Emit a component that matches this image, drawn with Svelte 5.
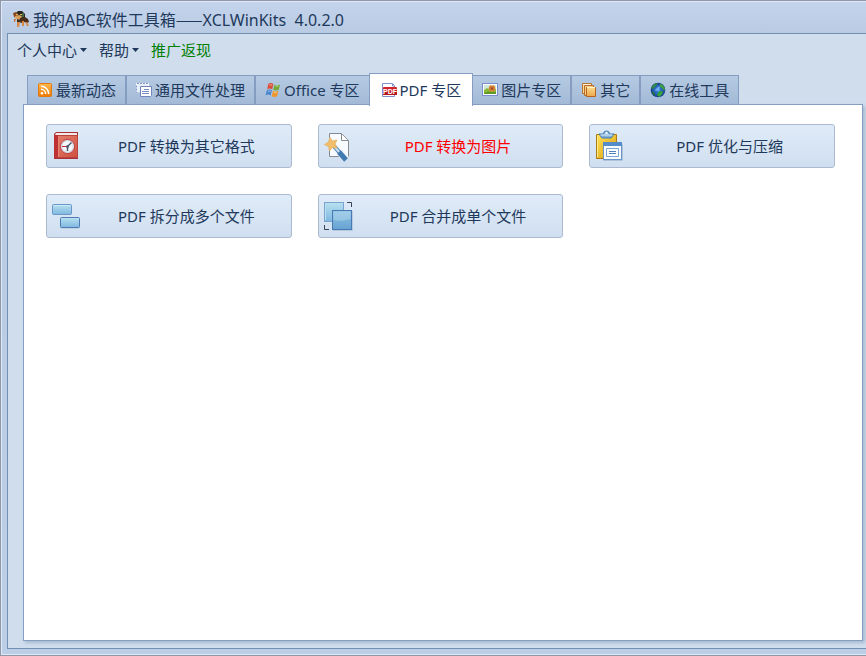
<script>
    let activeTab = $state('pdf');

    const menus = [
        { label: '个人中心', dropdown: true },
        { label: '帮助', dropdown: true },
        { label: '推广返现', highlight: true }
    ];

    const tabs = [
        { id: 'news', label: '最新动态' },
        { id: 'files', label: '通用文件处理' },
        { id: 'office', label: 'Office 专区' },
        { id: 'pdf', label: 'PDF 专区' },
        { id: 'image', label: '图片专区' },
        { id: 'other', label: '其它' },
        { id: 'online', label: '在线工具' }
    ];

    const tools = [
        { icon: 'book', label: 'PDF 转换为其它格式', tab: 'pdf' },
        { icon: 'wand', label: 'PDF 转换为图片', tab: 'pdf', hot: true },
        { icon: 'clipboard', label: 'PDF 优化与压缩', tab: 'pdf' },
        { icon: 'split', label: 'PDF 拆分成多个文件', tab: 'pdf' },
        { icon: 'merge', label: 'PDF 合并成单个文件', tab: 'pdf' }
    ];

    let visibleTools = $derived(tools.filter(tool => tool.tab === activeTab));
</script>

{#snippet tabIcon(id)}
    <svg class="tab-icon" viewBox="0 0 16 16" aria-hidden="true">
        {#if id === 'news'}
            <rect x="1.5" y="1.5" width="13" height="13" rx="1" fill="url(#orange)" stroke="#e07a10" />
            <circle cx="5" cy="11.2" r="1.3" fill="#fff" />
            <path d="M4 7.3a4.7 4.7 0 0 1 4.7 4.7M4 4.3a7.7 7.7 0 0 1 7.7 7.7" fill="none" stroke="#fff" stroke-width="1.5" />
        {:else if id === 'files'}
            <path d="M.5 1.5h12v9H.5z" fill="#e8eefa" stroke="#fff" />
            <path d="M.5 3.5v7h3M1 1.5h11" fill="none" stroke="#8296c8" stroke-dasharray="2 1" />
            <path d="M4.5 4.5h11v9l-1 1h-10z" fill="#fff" stroke="#7085bd" />
            <path d="M8 7.5h5M6 9.5h7M6 11.5h7" stroke="#7890c5" />
        {:else if id === 'office'}
            <path d="M3.2 2q2.4-1.8 5.2 0L7.2 7.2q-2.6-1.5-5 0z" fill="#dd4e39" />
            <path d="M9.5 2.8q2.7 1.4 5.5 0l-1.3 5q-2.9 1.4-5.4 0z" fill="#74a936" />
            <path d="M1.8 8.3q2.7-1.5 5.1 0l-1.3 5.1q-2.6-1.6-5.1 0z" fill="#4885cc" />
            <path d="M8 8.8q2.7 1.5 5.4 0l-1.3 5.4q-2.9 1.4-5.4 0z" fill="#ee962b" />
            <path d="M4.2 3.2q1.5-.8 3 0M10.5 4q1.3.4 2.6 0M2.7 9.4q1.5-.8 3 0M8.9 10.2q1.3.5 2.7 0" fill="none" stroke="#fff" stroke-opacity=".5" />
        {:else if id === 'pdf'}
            <path d="M1.5 1.5h10l2 2v11h-12z" fill="#fff" stroke="#8190c4" />
            <path d="M11.5 2v2H13" fill="none" stroke="#8190c4" />
            <rect x="2" y="5" width="14" height="8" rx="1" fill="#d4232a" />
            <path d="M2 10h14v2a1 1 0 0 1-1 1H3a1 1 0 0 1-1-1z" fill="#b5151d" />
            <text x="9" y="12" text-anchor="middle" class="pdf-mark">PDF</text>
        {:else if id === 'image'}
            <rect x=".5" y="1.5" width="15" height="12" fill="#fff" stroke="#7a8ed0" />
            <path d="M2 3h12v9H2z" fill="#cfe9d8" />
            <path d="M2 8l3-2 4 2 5-1v5H2z" fill="#8cbb3c" />
            <path d="M2 11q5-3 12-1v2H2z" fill="#5d9a26" />
            <circle cx="10" cy="6.5" r="3.3" fill="#e8a03d" />
            <path d="M8 3.5l2 1 2-1 1 3-1 3-2-1-2 1-1-3z" fill="#d07a35" />
            <circle cx="10" cy="6.5" r="1.3" fill="#a4532a" />
        {:else if id === 'other'}
            <path d="M1.5 1.5h9v10h-9z" fill="#f8d99d" stroke="#bb7330" />
            <path d="M2 2.5h8" stroke="#fff3d8" />
            <path d="M3.5 3.5h9v10h-9z" fill="#f6cf83" stroke="#b96a29" />
            <path d="M5.5 5.5h9v9h-9z" fill="url(#folder)" stroke="#b8621f" />
            <path d="M6 5.5h8" stroke="#fff0c5" />
        {:else}
            <circle cx="8" cy="8" r="7.3" fill="url(#globe)" />
            <path d="M4 2l4-1-2 3-3 3-2-1z" fill="#2f8c48" />
            <path d="M10 1.5l3 1.5 2 4-1 2-2-3-2-1z" fill="#3d9e46" />
            <path d="M9 9l4 .5-1 3-3 2.5-2-2z" fill="#35a23a" />
            <path d="M1.5 8.5L4 10l1 4-2-1z" fill="#216f43" />
            <path d="M9.5 3.5L4.5 8.5l5 .5z" fill="#7bb9fa" fill-opacity=".8" />
        {/if}
    </svg>
{/snippet}

{#snippet toolIcon(name)}
    <svg class="tool-icon" viewBox="0 0 32 32" aria-hidden="true">
        {#if name === 'book'}
            <path d="M4 4l2-2h22v27H4z" fill="#a72f35" />
            <path d="M6 3h21v2H5z" fill="#f5e9e6" />
            <rect x="4.5" y="5.5" width="23" height="22" fill="url(#red)" stroke="#b9443f" />
            <path d="M4 5h4v23H4z" fill="#bd3034" />
            <path d="M8.5 6v21" stroke="#e58375" />
            <circle cx="17.5" cy="16.5" r="7" fill="#f5f7fb" stroke="#b5343a" />
            <circle cx="17.5" cy="16.5" r="5.8" fill="none" stroke="#c8ced9" />
            <path d="M12 16.5h5" stroke="#c92a36" />
            <path d="M17.5 16.5l4-4M17.5 16v5" fill="none" stroke="#405266" stroke-width="1.4" />
            <circle cx="17.5" cy="16.5" r="1.5" fill="#526276" />
        {:else if name === 'wand'}
            <path d="M7.5 8V3.5h12l7 7v16h-19z" fill="#f8fbff" />
            <path d="M7.5 8V3.5h12l7 7v16H26M7.5 18v8.5H17" fill="none" stroke="#858b91" />
            <path d="M19.5 4v6.5H26" fill="#fff" stroke="#858b91" />
            <path d="M11 15L24 29" stroke="#f2f7fd" stroke-width="7" />
            <path d="M11 15l7 8" stroke="#447bad" stroke-width="4" />
            <path d="M11 15l7 8" stroke="#cfe2f3" stroke-width="2" />
            <path d="M17 22l7 8" stroke="#417ab0" stroke-width="5" />
            <path d="M8 7.5l2.5 3.500 4.500-1-2 4 2 4-4.500-.5L7.500 21 6.500 16.500 2.500 14.500 6.500 12z" fill="#f0be6c" stroke="#e5ad58" stroke-width=".7" />
        {:else if name === 'clipboard'}
            <path d="M3.5 4.5h20v24h-20z" fill="url(#yellow)" stroke="#ad7911" />
            <path d="M4.5 6v21" stroke="#ffef8a" />
            <path d="M6 4h4.5q0-3 3-3t3 3H21l-3 4H9z" fill="#83b1d8" stroke="#3f78ad" />
            <circle cx="13.5" cy="3" r="1.3" fill="#e7f5ff" />
            <path d="M7.5 5h12" stroke="#d9edfb" />
            <rect x="10" y="14" width="20" height="17" rx="1" fill="#456a98" fill-opacity=".25" />
            <rect x="10.5" y="12.5" width="18" height="17" fill="#f9fcff" stroke="#6a94c8" />
            <path d="M10 12h19v4H10z" fill="#568cc9" />
            <path d="M13.5 18.5h12v8h-12z" fill="#fff" stroke="#79a4d3" />
            <path d="M16 21.5h7M16 23.5h7" stroke="#4e83bd" />
        {:else if name === 'split'}
            <rect x="2.5" y="4.5" width="19" height="10" rx="1" fill="url(#blue)" stroke="#6a96c8" />
            <path d="M4 5.5h16" stroke="#c8ecf8" />
            <rect x="10.5" y="18.5" width="19" height="10" rx="1" fill="#426b9c" fill-opacity=".25" />
            <rect x="10.5" y="17.5" width="19" height="10" rx="1" fill="url(#blue)" stroke="#4f7bb2" />
            <path d="M12 18.5h16" stroke="#b9def5" />
        {:else}
            <path d="M25 2.5h4.5V7M2.5 25v4.5H7" fill="none" stroke="#35445b" />
            <rect x="2.5" y="2.5" width="19" height="19" fill="url(#blue)" stroke="#7ba3d0" />
            <path d="M3.5 20V3.5h17" fill="none" stroke="#b8e0ef" />
            <rect x="11" y="11" width="20" height="20" fill="#426b9c" fill-opacity=".2" />
            <rect x="10.5" y="10.5" width="19" height="19" fill="url(#blueDark)" stroke="#4979b4" />
            <path d="M11.5 20V11.5h17V19q-9 3-17 1z" fill="#b5daf0" fill-opacity=".45" />
        {/if}
    </svg>
{/snippet}

<svg class="paints" aria-hidden="true">
    <defs>
        <linearGradient id="orange" x2="0" y2="1"><stop stop-color="#ffb94e" /><stop offset="1" stop-color="#ee7900" /></linearGradient>
        <linearGradient id="folder" x2="0" y2="1"><stop stop-color="#fbd98a" /><stop offset="1" stop-color="#eda84c" /></linearGradient>
        <radialGradient id="globe"><stop stop-color="#3f8fea" /><stop offset="1" stop-color="#163a8c" /></radialGradient>
        <linearGradient id="red" x2="1" y2="1"><stop stop-color="#e48170" /><stop offset="1" stop-color="#d0503f" /></linearGradient>
        <linearGradient id="yellow" x2="1" y2="1"><stop stop-color="#ffe35b" /><stop offset="1" stop-color="#d99a09" /></linearGradient>
        <linearGradient id="blue" x2="0" y2="1"><stop stop-color="#b7e1ef" /><stop offset="1" stop-color="#7fb7e0" /></linearGradient>
        <linearGradient id="blueDark" x2="0" y2="1"><stop stop-color="#8fc3e2" /><stop offset="1" stop-color="#67a2d3" /></linearGradient>
    </defs>
</svg>

<div class="window">
    <header class="title-bar">
        <svg class="app-icon" viewBox="0 0 16 16" aria-hidden="true">
            <path d="M3 2l2-2h4l3 3v4l-3 2-4-1z" fill="#29281f" />
            <path d="M0 2l3-1 2 2-2 4-2-1z" fill="#8a4a22" />
            <path d="M2 5l4-1 3 1-1 3-3 1-3-2z" fill="#d8a05c" />
            <path d="M3 3h2v1H3zM7 3h2v1H7z" fill="#efb45d" />
            <path d="M9 2h2v4H9z" fill="#3f6a45" />
            <path d="M7 7l5-1 3 2 1 3-2 1-2-1-3 1-3-1z" fill="#4a2e1c" />
            <path d="M4 8l3 1-1 3-2-1z" fill="#3a2b20" />
            <path d="M4 11h3l-1 5H4zM9 10h2v5H9zM12 11h2l2 4h-2z" fill="#d98946" />
            <path d="M1 8h2l-1 3H1z" fill="#c8723a" />
        </svg>
        <h1>我的ABC软件工具箱<span class="dash">——</span>XCLWinKits&nbsp; 4.0.2.0</h1>
    </header>

    <main class="client">
        <nav class="menu">
            {#each menus as menu}
                <button class:highlight={menu.highlight}>
                    {menu.label}
                    {#if menu.dropdown}
                        <svg class="arrow" viewBox="0 0 7 4" aria-hidden="true"><path d="M0 0h7L3.5 4z" /></svg>
                    {/if}
                </button>
            {/each}
        </nav>

        <div class="tabs" role="tablist">
            {#each tabs as tab}
                <button
                    role="tab"
                    id="tab-{tab.id}"
                    aria-selected={activeTab === tab.id}
                    aria-controls="tool-panel"
                    class:active={activeTab === tab.id}
                    onclick={() => (activeTab = tab.id)}
                >
                    {@render tabIcon(tab.id)}
                    {tab.label}
                </button>
            {/each}
        </div>

        <div class="panel" id="tool-panel" role="tabpanel" aria-labelledby="tab-{activeTab}">
            {#each visibleTools as tool}
                <button class="tool">
                    {@render toolIcon(tool.icon)}
                    <span class="tool-label" class:hot={tool.hot}>{tool.label}</span>
                </button>
            {/each}
        </div>
    </main>
</div>

<style>
    :global(body) {
        margin: 0;
    }

    .window, button {
        font-family: "Noto Sans", "Noto Sans CJK SC", sans-serif;
        font-size: 15px;
        line-height: 20px;
        color: #1e395b;
    }

    .window {
        box-sizing: border-box;
        min-height: 100vh;
        display: flex;
        flex-direction: column;
        padding-left: 6px;
        padding-bottom: 6px;
        border: 1px solid #8f98a8;
        border-right: none;
        background: linear-gradient(#c3d4ec, #b9cbe3 33px, #bccfe6);
        box-shadow: inset 1px 1px #dfe9f5, inset 0 -1px #dfe9f5;
    }

    button {
        margin: 0;
        cursor: pointer;
        white-space: nowrap;
    }

    svg {
        display: block;
        flex: none;
    }

    .paints {
        position: absolute;
        width: 0;
        height: 0;
    }

    .title-bar {
        display: flex;
        align-items: center;
        gap: 4px;
        height: 32px;
        padding: 4px 0 0 6px;
        box-sizing: border-box;
    }

    .app-icon {
        width: 16px;
        height: 16px;
    }

    h1 {
        margin: 0;
        font-size: 16px;
        font-weight: normal;
    }

    .dash {
        font-family: "Noto Sans CJK SC", sans-serif;
    }

    .client {
        flex: 1;
        display: flex;
        flex-direction: column;
        padding: 0 3px 7px 15px;
        border: 1px solid #7190b2;
        border-right: none;
        background: #cfdded;
    }

    .menu {
        display: flex;
        align-items: center;
        height: 31px;
        gap: 12px;
        margin-left: -6px;
    }

    .menu button {
        display: flex;
        align-items: center;
        gap: 3px;
        padding: 0;
        border: none;
        background: none;
    }

    .menu .highlight {
        color: #008000;
    }

    .arrow {
        width: 7px;
        height: 4px;
        fill: #1e395b;
    }

    .tabs {
        display: flex;
        align-items: flex-end;
        height: 40px;
        padding-left: 4px;
    }

    .tabs button {
        display: flex;
        align-items: center;
        gap: 3px;
        box-sizing: border-box;
        height: 30px;
        padding: 0 9px;
        border: 1px solid #849dc0;
        background: linear-gradient(#b5cae2, #a3bad7);
    }

    .tabs button.active {
        height: 33px;
        margin: 0 -1px -1px;
        padding: 0 11px;
        border-bottom: none;
        background: #fff;
        z-index: 1;
    }

    .tab-icon {
        width: 16px;
        height: 16px;
    }

    .pdf-mark {
        font-family: "Liberation Sans", sans-serif;
        font-size: 7px;
        font-weight: bold;
        fill: #fff;
    }

    .panel {
        flex: 1;
        display: grid;
        grid-template-columns: repeat(3, 1fr);
        gap: 26px;
        align-content: start;
        margin-top: -1px;
        padding: 19px 27px 19px 22px;
        border: 1px solid #849dc0;
        background: #fff;
        box-shadow: 2px 2px 3px #a9bbd3;
    }

    .tool {
        display: flex;
        align-items: center;
        height: 44px;
        padding: 0 0 0 3px;
        border: 1px solid #abbad0;
        border-radius: 3px;
        background: linear-gradient(#dfebf8, #d0dff0);
    }

    .tool:hover {
        background: linear-gradient(#eaf3fc, #dae7f5);
    }

    .tool-icon {
        width: 32px;
        height: 32px;
    }

    .tool-label {
        flex: 1;
        text-align: center;
    }

    .hot {
        color: #f00;
    }
</style>
